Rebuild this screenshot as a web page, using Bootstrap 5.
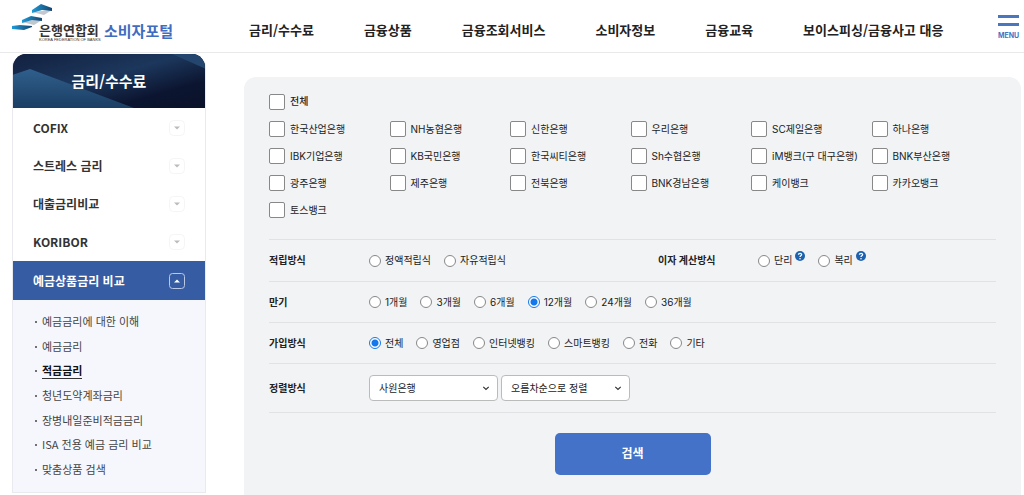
<!DOCTYPE html>
<html lang="ko">
<head>
<meta charset="utf-8">
<meta name="viewport" content="width=device-width, initial-scale=1">
<title>은행연합회 소비자포털 - 적금금리</title>
<link rel="stylesheet" href="https://cdn.jsdelivr.net/npm/bootstrap@5.3.0/dist/css/bootstrap.min.css">
<style>
  body { font-family: "Noto Sans CJK KR", sans-serif; color: #222; background: #fff; overflow-x: hidden; }
  a { color: inherit; text-decoration: none; }

  .site-header { height: 53px; border-bottom: 1px solid #e9e9eb; padding: 0 5px 0 12px; }
  .brand-link { width: 237px; height: 52px; padding-top: 4px; }
  .brand-mark { width: 42px; height: 28px; }
  .brand-org { width: 60px; margin-left: -15px; padding-top: 18px; color: #333; }
  .brand-org b { font-size: 13px; line-height: 15px; font-weight: 700; }
  .brand-org small { font: 400 4px/5px "Liberation Sans", sans-serif; white-space: nowrap; }
  .brand-portal { font-size: 15px; line-height: 20px; font-weight: 700; color: #3f6cbf; padding-top: 17px; margin-left: 5px; }
  .main-nav { gap: 50px; padding-top: 8px; font-size: 13px; line-height: 20px; font-weight: 700; white-space: nowrap; }
  .menu-btn { border: 0; background: none; padding: 0; width: 21px; color: #4472c4; font: 700 7px/10px "Inter", sans-serif; margin-top: 3px; }
  .menu-btn i { display: block; height: 3px; background: #4a76bd; margin-bottom: 5px; }

  .side { flex: 0 0 194px; margin-left: 12px; margin-top: 1px; }
  .side-box { border: 1px solid #e8eaf0; border-width: 0 1px 1px; border-radius: 14px 14px 0 0; overflow: hidden; }
  .side-title { height: 54px; margin: 0 -1px; font-size: 15px; font-weight: 700; color: #fff; background: #0b142d; }
  .side-title svg { position: absolute; inset: 0; width: 100%; height: 100%; }
  .side-title span { position: relative; }
  .side-nav { padding-top: 1px; }
  .side-link { height: 38px; padding: 0 20px; font-size: 12px; font-weight: 700; color: #333; }
  .side-link.open { height: 39px; margin: 0 -1px; padding: 0 21px; background: #365ca3; color: #fff; }
  .side-link svg { width: 16px; height: 16px; }
  .side-sub { background: #f5f7fc; min-height: 192px; padding: 9px 22px 11px; font-size: 11px; line-height: 24px; color: #444; }
  .side-sub li::before { content: ""; display: inline-block; width: 2px; height: 2px; background: #444; border-radius: 1px; margin-right: 5px; vertical-align: 3px; }
  .side-sub .now { color: #111; font-weight: 700; border-bottom: 1px solid #333; }

  .search-panel { margin: 24px 3px 0 38px; padding: 11px 25px 48px; background: #f1f3f5; border-radius: 12px; font-family: "Inter", "Noto Sans CJK KR", sans-serif; font-size: 10px; color: #222; }
  .bank-grid { display: grid; grid-template-columns: repeat(6, 1fr); row-gap: 1px; padding: 0 4px 16px 0; }
  .opt { display: flex; align-items: center; white-space: nowrap; }
  .bank-grid .opt { height: 26px; }
  .bank-grid .all { grid-column: 1 / -1; font-weight: 500; height: 27px; }
  .opt .form-check-input { margin: 0; border-color: #888; flex: none; box-shadow: none; background-color: #fff; }
  .opt [type=checkbox] { width: 16px; height: 16px; border-radius: 2px; margin-right: 5px; }
  .opt [type=radio] { width: 12px; height: 12px; margin-right: 4px; }
  .opt [type=radio]:checked { border-color: #1477ec; background: radial-gradient(circle, #1477ec 0 3px, #fff 4px); }
  .cond { border-top: 1px solid #e0e2e5; min-height: 41px; }
  .cond.split { min-height: 42px; }
  .cond-tall { min-height: 50px; border-bottom: 1px solid #e0e2e5; }
  .cond-name { width: 100px; flex: none; font-weight: 700; font-size: 10px; }
  .cond-opts { display: flex; gap: 13px; }
  .split { display: grid; grid-template-columns: 389fr 338fr; }
  .help-btn { border: 0; background: none; padding: 0; width: 10px; height: 10px; margin: 0 0 10px 3px; display: flex; }
  .sort { width: 129px; height: 26px; padding: 0 20px 0 9px; font-size: 10px; border-color: #bbb; border-radius: 4px; color: #222; background-size: 8px 8px; background-position: right 7px center;
    background-image: url("data:image/svg+xml,%3csvg xmlns='http://www.w3.org/2000/svg' viewBox='0 0 8 8'%3e%3cpath fill='none' stroke='%23333' stroke-width='1.2' d='M1.3 2.8 4 5.5 6.7 2.8'/%3e%3c/svg%3e"); }
  .sort-group { gap: 3px; }
  .search-btn { width: 156px; height: 42px; margin-top: 20px; background: #4472c9; border: 0; border-radius: 5px; color: #fff; font-size: 12px; font-weight: 700; }
</style>
</head>
<body>
<svg class="d-none">
  <symbol id="down" viewBox="0 0 16 16"><rect x=".5" y=".5" width="15" height="15" rx="4" fill="#fff" stroke="#f5f5f6"/><path d="M5 6.5h6L8 9.5z" fill="#bbb"/></symbol>
  <symbol id="up" viewBox="0 0 16 16"><rect x=".5" y=".5" width="15" height="15" rx="3" fill="none" stroke="#b9c9e6"/><path d="M5 9.5h6L8 6.5z" fill="#fff"/></symbol>
  <symbol id="help" viewBox="0 0 10 10"><circle cx="5" cy="5" r="5" fill="#1d62b0"/><path d="M3.4 3.7C3.5 1.8 6.7 1.8 6.6 3.7 6.5 4.8 5 4.6 5 6" fill="none" stroke="#fff" stroke-width="1.3"/><circle cx="5" cy="7.8" r=".8" fill="#fff"/></symbol>
</svg>

<header class="site-header d-flex align-items-center">
  <a href="#" class="brand-link d-flex align-items-start flex-shrink-0">
    <svg class="brand-mark" viewBox="0 0 42 28" aria-hidden="true">
      <defs><linearGradient id="blue"><stop offset="0" stop-color="#1f9bd8"/><stop offset="1" stop-color="#17456f"/></linearGradient></defs>
      <path d="M20 8 30 7 40 6 32 11z" fill="#c3c9cf"/><path d="M20 6 29 0 40 4V7L30 6 20 9z" fill="url(#blue)"/>
      <path d="M10 18 20 16 30 16 22 21z" fill="#bfc7cf"/><path d="M10 16 19 12 30 14V17L20 16 10 19z" fill="url(#blue)"/>
      <path d="M0 22 8 21 20 22V23L12 26 0 25z" fill="url(#blue)"/>
    </svg>
    <span class="brand-org d-flex flex-column"><b>은행연합회</b><small>KOREA FEDERATION OF BANKS</small></span>
    <span class="brand-portal">소비자포털</span>
  </a>
  <nav class="main-nav d-flex" aria-label="주 메뉴">
    <a href="#">금리/수수료</a><a href="#">금융상품</a><a href="#">금융조회서비스</a><a href="#">소비자정보</a><a href="#">금융교육</a><a href="#">보이스피싱/금융사고 대응</a>
  </nav>
  <button type="button" class="menu-btn ms-auto"><i></i><i></i>MENU</button>
</header>

<div class="d-flex align-items-start">
  <aside class="side">
    <div class="side-box">
      <div class="side-title position-relative d-flex align-items-center justify-content-center">
        <svg viewBox="0 0 194 54" preserveAspectRatio="none" aria-hidden="true">
          <defs>
            <linearGradient id="g1" x1="0" y1="0" x2="1" y2="1"><stop offset="0" stop-color="#12203f"/><stop offset=".45" stop-color="#1c375c"/><stop offset=".75" stop-color="#0c1530"/><stop offset="1" stop-color="#0a1229"/></linearGradient>
            <linearGradient id="g2" x1="0" y1="0" x2="0" y2="1"><stop offset="0" stop-color="#2f5f8c"/><stop offset="1" stop-color="#1b3e63"/></linearGradient>
          </defs>
          <path d="M0 0h194v54H0z" fill="url(#g1)"/>
          <path d="M0 21 18 15 122 54H0z" fill="url(#g2)"/>
          <path d="M160 0h34v15z" fill="#24466e"/>
        </svg>
        <span>금리/수수료</span>
      </div>
      <nav class="side-nav" aria-label="금리/수수료 메뉴">
        <a href="#" class="side-link d-flex align-items-center justify-content-between">COFIX<svg><use href="#down"/></svg></a>
        <a href="#" class="side-link d-flex align-items-center justify-content-between">스트레스 금리<svg><use href="#down"/></svg></a>
        <a href="#" class="side-link d-flex align-items-center justify-content-between">대출금리비교<svg><use href="#down"/></svg></a>
        <a href="#" class="side-link d-flex align-items-center justify-content-between">KORIBOR<svg><use href="#down"/></svg></a>
        <a href="#" class="side-link open d-flex align-items-center justify-content-between">예금상품금리 비교<svg><use href="#up"/></svg></a>
        <ul class="side-sub list-unstyled mb-0 d-flex flex-column justify-content-between">
          <li><a href="#">예금금리에 대한 이해</a></li>
          <li><a href="#">예금금리</a></li>
          <li><a href="#" class="now" aria-current="page">적금금리</a></li>
          <li><a href="#">청년도약계좌금리</a></li>
          <li><a href="#">장병내일준비적금금리</a></li>
          <li><a href="#">ISA 전용 예금 금리 비교</a></li>
          <li><a href="#">맞춤상품 검색</a></li>
        </ul>
      </nav>
    </div>
  </aside>

  <main class="flex-grow-1">
    <form class="search-panel">
      <div class="bank-grid">
        <label class="opt all"><input class="form-check-input" type="checkbox">전체</label>
        <label class="opt"><input class="form-check-input" type="checkbox">한국산업은행</label>
        <label class="opt"><input class="form-check-input" type="checkbox">NH농협은행</label>
        <label class="opt"><input class="form-check-input" type="checkbox">신한은행</label>
        <label class="opt"><input class="form-check-input" type="checkbox">우리은행</label>
        <label class="opt"><input class="form-check-input" type="checkbox">SC제일은행</label>
        <label class="opt"><input class="form-check-input" type="checkbox">하나은행</label>
        <label class="opt"><input class="form-check-input" type="checkbox">IBK기업은행</label>
        <label class="opt"><input class="form-check-input" type="checkbox">KB국민은행</label>
        <label class="opt"><input class="form-check-input" type="checkbox">한국씨티은행</label>
        <label class="opt"><input class="form-check-input" type="checkbox">Sh수협은행</label>
        <label class="opt"><input class="form-check-input" type="checkbox">iM뱅크(구 대구은행)</label>
        <label class="opt"><input class="form-check-input" type="checkbox">BNK부산은행</label>
        <label class="opt"><input class="form-check-input" type="checkbox">광주은행</label>
        <label class="opt"><input class="form-check-input" type="checkbox">제주은행</label>
        <label class="opt"><input class="form-check-input" type="checkbox">전북은행</label>
        <label class="opt"><input class="form-check-input" type="checkbox">BNK경남은행</label>
        <label class="opt"><input class="form-check-input" type="checkbox">케이뱅크</label>
        <label class="opt"><input class="form-check-input" type="checkbox">카카오뱅크</label>
        <label class="opt"><input class="form-check-input" type="checkbox">토스뱅크</label>
      </div>
      <div class="cond split">
        <div class="d-flex align-items-center" role="radiogroup" aria-labelledby="n1">
          <div class="cond-name" id="n1">적립방식</div>
          <div class="cond-opts">
            <label class="opt"><input class="form-check-input" type="radio" name="save">정액적립식</label>
            <label class="opt"><input class="form-check-input" type="radio" name="save">자유적립식</label>
          </div>
        </div>
        <div class="d-flex align-items-center" role="radiogroup" aria-labelledby="n2">
          <div class="cond-name" id="n2">이자 계산방식</div>
          <div class="cond-opts">
            <div class="d-flex align-items-center"><label class="opt"><input class="form-check-input" type="radio" name="interest">단리</label><button type="button" class="help-btn" aria-label="단리 도움말"><svg width="10" height="10"><use href="#help"/></svg></button></div>
            <div class="d-flex align-items-center"><label class="opt"><input class="form-check-input" type="radio" name="interest">복리</label><button type="button" class="help-btn" aria-label="복리 도움말"><svg width="10" height="10"><use href="#help"/></svg></button></div>
          </div>
        </div>
      </div>
      <div class="cond d-flex align-items-center" role="radiogroup" aria-labelledby="n3">
        <div class="cond-name" id="n3">만기</div>
        <div class="cond-opts">
          <label class="opt"><input class="form-check-input" type="radio" name="term">1개월</label>
          <label class="opt"><input class="form-check-input" type="radio" name="term">3개월</label>
          <label class="opt"><input class="form-check-input" type="radio" name="term">6개월</label>
          <label class="opt"><input class="form-check-input" type="radio" name="term" checked>12개월</label>
          <label class="opt"><input class="form-check-input" type="radio" name="term">24개월</label>
          <label class="opt"><input class="form-check-input" type="radio" name="term">36개월</label>
        </div>
      </div>
      <div class="cond d-flex align-items-center" role="radiogroup" aria-labelledby="n4">
        <div class="cond-name" id="n4">가입방식</div>
        <div class="cond-opts">
          <label class="opt"><input class="form-check-input" type="radio" name="join" checked>전체</label>
          <label class="opt"><input class="form-check-input" type="radio" name="join">영업점</label>
          <label class="opt"><input class="form-check-input" type="radio" name="join">인터넷뱅킹</label>
          <label class="opt"><input class="form-check-input" type="radio" name="join">스마트뱅킹</label>
          <label class="opt"><input class="form-check-input" type="radio" name="join">전화</label>
          <label class="opt"><input class="form-check-input" type="radio" name="join">기타</label>
        </div>
      </div>
      <div class="cond cond-tall d-flex align-items-center">
        <label class="cond-name" for="sortkey">정렬방식</label>
        <div class="sort-group d-flex">
          <select class="form-select sort" id="sortkey"><option>사원은행</option></select>
          <select class="form-select sort" aria-label="정렬 순서"><option>오름차순으로 정렬</option></select>
        </div>
      </div>
      <div class="text-center"><button type="submit" class="search-btn">검색</button></div>
    </form>
  </main>
</div>
<script src="https://cdn.jsdelivr.net/npm/bootstrap@5.3.0/dist/js/bootstrap.bundle.min.js"></script>
</body>
</html>
